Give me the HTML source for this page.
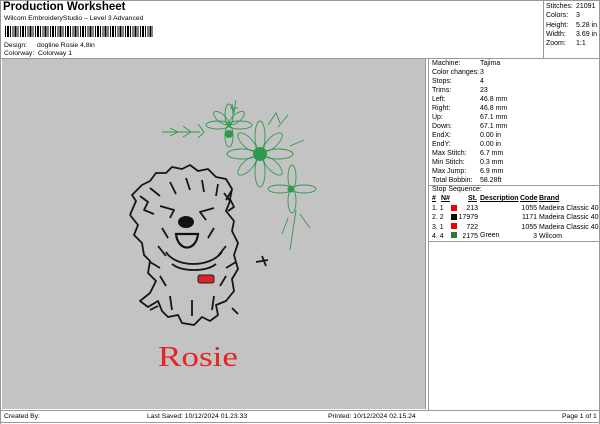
<!DOCTYPE html>
<html><head><meta charset="utf-8"><style>
*{margin:0;padding:0;box-sizing:border-box}
body{width:600px;height:424px;background:#fff;font-family:"Liberation Sans",sans-serif;font-size:7px;color:#000;position:relative;overflow:hidden}
.a{position:absolute;white-space:nowrap}
.l{position:absolute;background:#999}
</style></head><body>
<div class="l" style="left:0;top:0;width:600px;height:1px"></div>
<div class="l" style="left:0;top:0;width:1px;height:424px"></div>
<div class="l" style="left:599px;top:0;width:1px;height:424px"></div>
<div class="l" style="left:0;top:422px;width:600px;height:1px"></div>
<div class="a" style="left:3px;top:1px;font-size:11.5px;font-weight:bold">Production Worksheet</div>
<div class="a" style="left:4px;top:15px;font-size:6.8px">Wilcom EmbroideryStudio – Level 3 Advanced</div>
<div class="a" style="left:5px;top:26px;width:148px;height:11px;background:repeating-linear-gradient(90deg,#000 0 1px,#fff 1px 2px,#000 2px 4px,#fff 4px 5px,#000 5px 6px,#fff 6px 7.5px)"></div>
<div class="a" style="left:4px;top:42px;font-size:6.8px">Design:</div>
<div class="a" style="left:37px;top:42px;font-size:6.8px">dogline Rosie 4,8in</div>
<div class="a" style="left:4px;top:50px;font-size:6.8px">Colorway:&nbsp; Colorway 1</div>
<div class="a" style="left:1px;top:58px;width:427px;height:1px;background:#999"></div>
<div class="a" style="left:2px;top:59px;width:424px;height:350px;background:#c3c3c3;border-right:1px solid #999"></div>
<div class="l" style="left:428px;top:58px;width:1px;height:352px"></div>
<div class="l" style="left:543px;top:0;width:1px;height:58px"></div>
<div class="l" style="left:428px;top:58px;width:172px;height:1px"></div>
<div class="a" style="left:546px;top:2px;line-height:9.3px">Stitches:<br>Colors:<br>Height:<br>Width:<br>Zoom:</div>
<div class="a" style="left:576px;top:2px;line-height:9.3px">21091<br>3<br>5.28 in<br>3.69 in<br>1:1</div>
<div class="a" style="left:432px;top:59px;line-height:9px">Machine:<br>Color changes:<br>Stops:<br>Trims:<br>Left:<br>Right:<br>Up:<br>Down:<br>EndX:<br>EndY:<br>Max Stitch:<br>Min Stitch:<br>Max Jump:<br>Total Bobbin:</div>
<div class="a" style="left:480px;top:59px;line-height:9px">Tajima<br>3<br>4<br>23<br>46.8 mm<br>46.8 mm<br>67.1 mm<br>67.1 mm<br>0.00 in<br>0.00 in<br>6.7 mm<br>0.3 mm<br>6.9 mm<br>58.28ft</div>
<div class="l" style="left:428px;top:185px;width:172px;height:1px"></div>
<div class="a" style="left:432px;top:186px">Stop Sequence:</div>
<div class="a" style="left:432px;top:195px;font-weight:bold;text-decoration:underline">#</div>
<div class="a" style="left:441px;top:195px;font-weight:bold;text-decoration:underline">N#</div>
<div class="a" style="left:468px;top:195px;font-weight:bold;text-decoration:underline">St.</div>
<div class="a" style="left:480px;top:195px;font-weight:bold;text-decoration:underline">Description</div>
<div class="a" style="left:520px;top:195px;font-weight:bold;text-decoration:underline">Code</div>
<div class="a" style="left:539px;top:195px;font-weight:bold;text-decoration:underline">Brand</div>
<div class="a" style="left:432px;top:204px;line-height:9.3px">1.&nbsp;1<br>2.&nbsp;2<br>3.&nbsp;1<br>4.&nbsp;4</div>
<div class="a" style="left:451px;top:205px;width:6px;height:6px;background:#e00"></div>
<div class="a" style="left:451px;top:214px;width:6px;height:6px;background:#000"></div>
<div class="a" style="left:451px;top:223px;width:6px;height:6px;background:#e00"></div>
<div class="a" style="left:451px;top:232px;width:6px;height:6px;background:#2a7a3a"></div>
<div class="a" style="left:458px;top:204px;width:20px;text-align:right;line-height:9.3px">213<br>17979<br>722<br>2175</div>
<div class="a" style="left:480px;top:232px">Green</div>
<div class="a" style="left:512px;top:204px;width:25px;text-align:right;line-height:9.3px">1055<br>1171<br>1055<br>3</div>
<div class="a" style="left:539px;top:204px;line-height:9.3px">Madeira Classic 40<br>Madeira Classic 40<br>Madeira Classic 40<br>Wilcom</div>
<div class="l" style="left:428px;top:241px;width:172px;height:1px"></div>
<div class="l" style="left:0;top:410px;width:600px;height:1px"></div>
<div class="a" style="left:4px;top:413px;font-size:6.8px">Created By:</div>
<div class="a" style="left:147px;top:413px;font-size:6.8px">Last Saved: 10/12/2024 01.23.33</div>
<div class="a" style="left:328px;top:413px;font-size:6.8px">Printed: 10/12/2024 02.15.24</div>
<div class="a" style="left:562px;top:413px;font-size:6.8px">Page 1 of 1</div>
<svg class="a" style="left:0;top:0" width="600" height="424" viewBox="0 0 600 424">
<g fill="none" stroke="#2e9a4a" stroke-width="0.9">
<path d="M162 132 L200 132 M170 128 l8 4 l-8 4 M183 126 l8 6 l-8 5 M198 124 l6 8 l-6 6"/>
<path d="M232 104 l2 10 M236 100 l-2 12 M230 108 l8 0"/>
<ellipse cx="218" cy="125" rx="12" ry="4"/><ellipse cx="240" cy="125" rx="12" ry="4"/><ellipse cx="229" cy="115" rx="4" ry="11"/><ellipse cx="229" cy="136" rx="4" ry="11"/><ellipse cx="221" cy="118" rx="9" ry="4" transform="rotate(40 221 118)"/><ellipse cx="237" cy="118" rx="9" ry="4" transform="rotate(-40 237 118)"/>
<ellipse cx="242" cy="154" rx="15" ry="5"/><ellipse cx="278" cy="154" rx="15" ry="5"/><ellipse cx="260" cy="136" rx="5" ry="15"/><ellipse cx="260" cy="172" rx="5" ry="15"/><ellipse cx="247" cy="142" rx="12" ry="5" transform="rotate(45 247 142)"/><ellipse cx="273" cy="142" rx="12" ry="5" transform="rotate(-45 273 142)"/><ellipse cx="247" cy="166" rx="12" ry="5" transform="rotate(-45 247 166)"/><ellipse cx="273" cy="166" rx="12" ry="5" transform="rotate(45 273 166)"/>
<ellipse cx="280" cy="189" rx="12" ry="4"/><ellipse cx="304" cy="189" rx="12" ry="4"/><ellipse cx="292" cy="177" rx="4" ry="12"/><ellipse cx="292" cy="201" rx="4" ry="12"/>
<path d="M268 125 l8 -12 l4 10 M278 127 l10 -12 M290 146 l14 -6 M296 210 l-6 40 M300 214 l10 14 M288 218 l-6 16"/>
</g>
<g fill="#2e9a4a"><circle cx="229" cy="134" r="4"/><circle cx="260" cy="154" r="7"/><circle cx="291" cy="189" r="3.5"/></g>
<g fill="none" stroke="#151515" stroke-width="1.8" stroke-linejoin="round">
<path d="M130 215 l6-14 l-4-6 l10-10 l8-4 l6-8 l10 0 l6-6 l10 2 l8-4 l8 6 l10-2 l8 8 l10 2 l6 10 l-2 10 l4 8 l-6 4"/>
<path d="M130 215 l8 10 l-4 10 l8 8 l2 12 l6 6 l-2 12 l8 8 l-6 12 l-10 8 l8 6 l10-6 l4 10 l6 6 l10 -2 l4 8 l12 2 l8-8 l8 4 l8-6 l-2-10 l10-4 l8-10 l-2-12 l6-10 l-4-14 l4-12 l-6-12 l2-10 l-8-10 l4-10 l-6-8"/>
<path d="M140 196 l8 6 l-4 8 l10 4 M150 188 l10 8 M170 182 l6 12 M186 178 l4 12 M202 180 l2 12 M218 184 l-2 12 M232 190 l-6 10 M160 206 l14 4 l-4 8 M214 208 l-14 4 l6 8 M162 228 l6 10 M214 228 l-6 10"/>
<path d="M158 246 l8 10 M226 246 l-8 10 M150 262 l10 6 M236 262 l-10 6 M160 276 l6 10 M226 276 l-6 10 M170 296 l2 14 M214 296 l-2 14 M192 300 l0 16 M150 310 l8 -4 M238 314 l-6-6 M256 262 l12-2 M262 256 l4 10"/>
<path d="M166 252 c10 16 44 16 56 0 M172 264 c10 8 34 8 44 0"/>
</g>
<ellipse cx="186" cy="222" rx="8" ry="6" fill="#111"/>
<path d="M176 234 c2 18 20 18 22 0z" fill="#c3c3c3" stroke="#111" stroke-width="2.2"/>
<rect x="198" y="275" width="16" height="8" rx="2" fill="#d22" stroke="#222" stroke-width="1"/>
<text x="158" y="366" font-family="Liberation Serif,serif" font-size="28" fill="#e52424" textLength="80" lengthAdjust="spacingAndGlyphs">Rosie</text>
</svg>
</body></html>
